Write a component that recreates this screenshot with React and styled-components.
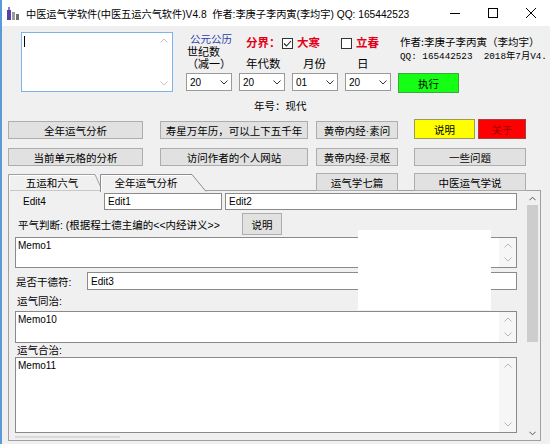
import React from "react";
import styled, { createGlobalStyle } from "styled-components";

const GlobalStyle = createGlobalStyle`
  html, body { margin: 0; padding: 0; background: #f0f0f0; }
  body { font-family: "Liberation Sans", "Noto Sans CJK SC", sans-serif; }
  * { box-sizing: border-box; }
`;

const Window = styled.div`
  width: 550px;
  height: 444px;
  overflow: hidden;
  background: #f0f0f0;
  border-left: 2px solid #5a9ad8;
  display: flex;
  flex-direction: column;
  font-size: 10.5px;
  color: #000;
`;

const TitleBar = styled.div`
  height: 26px;
  flex-shrink: 0;
  background: #fff;
  display: flex;
  align-items: center;
`;

const AppIcon = styled.svg`
  margin-left: 5px;
  width: 12px;
  height: 13px;
  flex-shrink: 0;
`;

const TitleText = styled.div`
  flex: 1;
  margin-left: 7px;
  font-size: 10.2px;
  white-space: nowrap;
  overflow: hidden;
`;

const WinButtons = styled.div`
  display: flex;
`;

const WinButton = styled.div`
  width: 38px;
  height: 26px;
  display: flex;
  align-items: center;
  justify-content: center;
`;

const TopArea = styled.div`
  display: flex;
  align-items: flex-start;
  padding-top: 6px;
  height: 93px;
  flex-shrink: 0;
`;

const MemoFrame = styled.div`
  position: relative;
  display: flex;
  width: ${(p) => p.$w}px;
  height: ${(p) => p.$h}px;
  margin-left: ${(p) => p.$ml || 0}px;
  margin-top: ${(p) => p.$mt || 0}px;
  background: #fff;
  border: 1px solid ${(p) => (p.$focus ? "#7eb4ea" : "#8a8a8a")};
  flex-shrink: 0;
`;

const MemoText = styled.div`
  flex: 1;
  padding: 2px 0 0 2px;
  font-size: 10px;
  line-height: 12px;
`;

const Caret = styled.div`
  width: 1px;
  height: 11px;
  margin: 3px 0 0 2px;
  background: #000;
`;

const ScrollCol = styled.div`
  width: 17px;
  display: flex;
  flex-direction: column;
  justify-content: space-between;
  align-items: center;
  padding: 5px 0;
  background: ${(p) => (p.$track ? "#f6f6f6" : "transparent")};
`;

const RightPanel = styled.div`
  margin-left: 13px;
  display: flex;
  flex-direction: column;
`;

const UpperRow = styled.div`
  display: flex;
  height: 41px;
`;

const CenturyCol = styled.div`
  width: 54px;
  display: flex;
  flex-direction: column;
`;

const BlueLabel = styled.div`
  margin-top: 1px;
  padding-left: 4px;
  line-height: 12px;
  color: #2b3fa7;
`;

const StackLabel = styled.div`
  margin-top: ${(p) => p.$mt || 0}px;
  padding-left: 1px;
  line-height: 11px;
  height: 11px;
  font-size: 11px;
  white-space: nowrap;
`;

const DateLabels = styled.div`
  width: 160px;
  display: flex;
  flex-direction: column;
`;

const SplitRow = styled.div`
  margin-top: 5px;
  height: 12px;
  display: flex;
  align-items: center;
`;

const RedLabel = styled.span`
  width: ${(p) => (p.$w ? `${p.$w}px` : "auto")};
  margin-left: ${(p) => p.$ml || 0}px;
  color: #e3001b;
  font-weight: bold;
  font-size: 11.5px;
  line-height: 12px;
  white-space: nowrap;
`;

const CheckBox = styled.svg`
  width: 11px;
  height: 11px;
  margin-left: ${(p) => p.$ml || 0}px;
  margin-right: 4px;
  flex-shrink: 0;
`;

const FieldLabels = styled.div`
  margin-top: 9px;
  height: 12px;
  display: flex;
`;

const FieldLabel = styled.span`
  width: ${(p) => p.$w}px;
  margin-left: ${(p) => p.$ml || 0}px;
  font-size: 11.5px;
  line-height: 12px;
`;

const Author = styled.div`
  display: flex;
  flex-direction: column;
  white-space: nowrap;
`;

const AuthorLine = styled.div`
  margin-top: ${(p) => p.$mt}px;
  line-height: 12px;
  font-family: ${(p) =>
    p.$mono
      ? '"Liberation Mono", "Noto Sans CJK SC", monospace'
      : '"Noto Sans CJK SC", sans-serif'};
  font-size: ${(p) => (p.$mono ? "9.3px" : "10.5px")};
`;

const ComboRow = styled.div`
  display: flex;
  align-items: flex-start;
  gap: 7px;
  height: 20px;
`;

const Combo = styled.div`
  width: 46px;
  height: 18px;
  background: #fff;
  border: 1px solid #9a9a9a;
  display: flex;
  align-items: center;
  justify-content: space-between;
  padding: 0 3px;
  font-size: 10px;
`;

const Btn = styled.div`
  width: ${(p) => (p.$w ? `${p.$w}px` : "auto")};
  height: ${(p) => p.$h || 18}px;
  grid-column: ${(p) => p.$col || "auto"};
  align-self: ${(p) => p.$align || "end"};
  background: ${(p) => p.$bg || "#e1e1e1"};
  border: 1px solid ${(p) => p.$bd || "#adadad"};
  color: ${(p) => p.$fg || "#000"};
  display: flex;
  align-items: center;
  justify-content: center;
  font-size: 10.5px;
  white-space: nowrap;
  flex-shrink: 0;
`;

const EraRow = styled.div`
  margin-top: 7px;
  padding-left: 68px;
  line-height: 12px;
`;

const ButtonGrid = styled.div`
  margin-left: 6px;
  display: grid;
  grid-template-columns: 135px 17px 148px 8px 82px 16px 112px;
  grid-template-rows: 20px 19px;
  row-gap: 8px;
  flex-shrink: 0;
`;

const ColorPair = styled.div`
  grid-column: 7;
  display: flex;
  gap: 3px;
`;

const TabRow = styled.div`
  position: relative;
  z-index: 2;
  margin-top: 7px;
  margin-left: 6px;
  height: 17px;
  display: grid;
  grid-template-columns: 135px 17px 148px 8px 82px 16px 112px;
  flex-shrink: 0;
`;

const TabStrip = styled.div`
  grid-column: 1 / 4;
  display: flex;
  align-items: flex-end;
`;

const Tab = styled.div`
  position: relative;
  width: ${(p) => p.$w}px;
  height: ${(p) => p.$h}px;
  margin-left: ${(p) => p.$ml || 0}px;
  margin-bottom: ${(p) => p.$mb || 0}px;
  z-index: ${(p) => (p.$active ? 2 : 1)};
  display: flex;
  align-items: center;
  flex-shrink: 0;
`;

const TabShape = styled.svg`
  position: absolute;
  left: 0;
  top: 0;
  width: 100%;
  height: 100%;
`;

const TabLabel = styled.span`
  position: relative;
  width: ${(p) => p.$w}px;
  text-align: center;
  line-height: 12px;
`;

const Panel = styled.div`
  position: relative;
  margin-left: 6px;
  width: 533px;
  height: 251px;
  border: 1px solid #a0a0a0;
  display: flex;
  flex-shrink: 0;
`;

const PanelBody = styled.div`
  flex: 1;
  padding-left: 6px;
  display: flex;
  flex-direction: column;
`;

const EditRow = styled.div`
  display: flex;
  align-items: center;
  margin-top: ${(p) => p.$mt}px;
  height: ${(p) => p.$h}px;
`;

const EditLabel = styled.span`
  width: ${(p) => p.$w}px;
  padding-left: ${(p) => p.$pl || 0}px;
  font-size: ${(p) => (p.$latin ? "10px" : "10.5px")};
  white-space: nowrap;
  flex-shrink: 0;
`;

const Edit = styled.div`
  width: ${(p) => p.$w}px;
  height: ${(p) => p.$h || 17}px;
  margin-left: ${(p) => p.$ml || 0}px;
  background: #fff;
  border: 1px solid #8a8a8a;
  padding-left: 3px;
  display: flex;
  align-items: center;
  font-size: 10px;
  flex-shrink: 0;
`;

const JudgeRow = styled.div`
  display: flex;
  align-items: flex-start;
  margin-top: 3px;
  height: 22px;
`;

const JudgeText = styled.span`
  width: 227px;
  margin-top: 6px;
  padding-left: 3px;
  line-height: 12px;
  white-space: nowrap;
`;

const SectionLabel = styled.div`
  margin-top: ${(p) => p.$mt}px;
  padding-left: 2px;
  line-height: 13px;
  height: 13px;
`;

const HScrollStub = styled.div`
  margin-top: 3px;
  width: 105px;
  height: 2px;
  background: #dadada;
`;

const VScroll = styled.div`
  width: 13px;
  margin-right: 1px;
  display: flex;
  flex-direction: column;
  align-items: center;
  background: #f0f0f0;
`;

const ArrowBox = styled.div`
  height: 14px;
  width: 100%;
  display: flex;
  align-items: center;
  justify-content: center;
`;

const Thumb = styled.div`
  width: 11px;
  height: 137px;
  background: #cdcdcd;
`;

const Spacer = styled.div`
  flex: 1;
`;

const WhiteCover = styled.div`
  position: absolute;
  left: 349px;
  top: 39px;
  width: 133px;
  height: 80px;
  background: #fff;
`;

const Chevron = ({ up, color = "#b9b9b9", w = 8 }) => (
  <svg width={w} height="5" viewBox="0 0 8 5">
    <polyline
      points={up ? "0.5,4.5 4,1 7.5,4.5" : "0.5,0.5 4,4 7.5,0.5"}
      fill="none"
      stroke={color}
      strokeWidth="1"
    />
  </svg>
);

const Memo = ({ w, h, ml, mt, focus, children }) => (
  <MemoFrame $w={w} $h={h} $ml={ml} $mt={mt} $focus={focus}>
    <MemoText>{children}</MemoText>
    <ScrollCol $track={!focus}>
      <Chevron up />
      <Chevron />
    </ScrollCol>
  </MemoFrame>
);

const Check = ({ checked, ml }) => (
  <CheckBox viewBox="0 0 11 11" $ml={ml}>
    <rect x="0.5" y="0.5" width="10" height="10" fill="#fff" stroke="#333" />
    {checked && (
      <polyline points="2,5.5 4.5,8 9,3" fill="none" stroke="#222" strokeWidth="1.1" />
    )}
  </CheckBox>
);

const DateCombo = ({ value }) => (
  <Combo>
    <span>{value}</span>
    <Chevron color="#333" />
  </Combo>
);

export default function App() {
  return (
    <>
      <GlobalStyle />
      <Window>
        <TitleBar>
          <AppIcon viewBox="0 0 12 13">
            <rect x="0" y="3" width="4" height="10" fill="#5b3fa4" />
            <rect x="1" y="0" width="2" height="3" fill="#8a7cc4" />
            <rect x="5" y="5" width="3" height="8" fill="#9a9a9a" />
            <rect x="9" y="7" width="3" height="6" fill="#6e6e6e" />
          </AppIcon>
          <TitleText>
            中医运气学软件(中医五运六气软件)V4.8&nbsp;&nbsp;作者:李庚子李丙寅(李均宇) QQ: 165442523
          </TitleText>
          <WinButtons>
            <WinButton>
              <svg width="10" height="10" viewBox="0 0 10 10">
                <line x1="0" y1="5.5" x2="10" y2="5.5" stroke="#000" />
              </svg>
            </WinButton>
            <WinButton>
              <svg width="10" height="10" viewBox="0 0 10 10">
                <rect x="0.5" y="0.5" width="9" height="9" fill="none" stroke="#000" />
              </svg>
            </WinButton>
            <WinButton>
              <svg width="10" height="10" viewBox="0 0 10 10">
                <line x1="0" y1="0" x2="10" y2="10" stroke="#000" />
                <line x1="10" y1="0" x2="0" y2="10" stroke="#000" />
              </svg>
            </WinButton>
          </WinButtons>
        </TitleBar>

        <TopArea>
          <MemoFrame $w={152} $h={60} $ml={19} $focus>
            <Caret />
            <Spacer />
            <ScrollCol>
              <Chevron up color="#c4c4c4" />
              <Chevron color="#c4c4c4" />
            </ScrollCol>
          </MemoFrame>
          <RightPanel>
            <UpperRow>
              <CenturyCol>
                <BlueLabel>公元公历</BlueLabel>
                <StackLabel $mt={2}>世纪数</StackLabel>
                <StackLabel $mt={1}>（减一）</StackLabel>
              </CenturyCol>
              <DateLabels>
                <SplitRow>
                  <RedLabel $w={36} $ml={6}>分界：</RedLabel>
                  <Check checked />
                  <RedLabel>大寒</RedLabel>
                  <Check ml={21} />
                  <RedLabel>立春</RedLabel>
                </SplitRow>
                <FieldLabels>
                  <FieldLabel $w={57} $ml={6}>年代数</FieldLabel>
                  <FieldLabel $w={54}>月份</FieldLabel>
                  <FieldLabel $w={20}>日</FieldLabel>
                </FieldLabels>
              </DateLabels>
              <Author>
                <AuthorLine $mt={4}>作者:李庚子李丙寅（李均宇）</AuthorLine>
                <AuthorLine $mt={3} $mono>
                  QQ: 165442523&nbsp;&nbsp;2018年7月V4.
                </AuthorLine>
              </Author>
            </UpperRow>
            <ComboRow>
              <DateCombo value="20" />
              <DateCombo value="20" />
              <DateCombo value="01" />
              <DateCombo value="20" />
              <Btn $w={61} $h={20} $bg="#14ff14" $bd="#3aa83a" $align="start">
                执行
              </Btn>
            </ComboRow>
            <EraRow>年号：现代</EraRow>
          </RightPanel>
        </TopArea>

        <ButtonGrid>
          <Btn $col={1}>全年运气分析</Btn>
          <Btn $col={3}>寿星万年历，可以上下五千年</Btn>
          <Btn $col={5}>黄帝内经·素问</Btn>
          <ColorPair>
            <Btn $w={61} $h={20} $bg="#ffff00" $bd="#9a9a5a">
              说明
            </Btn>
            <Btn $w={48} $h={20} $bg="#ff0000" $bd="#a04040" $fg="#990000">
              关于
            </Btn>
          </ColorPair>
          <Btn $col={1}>当前单元格的分析</Btn>
          <Btn $col={3}>访问作者的个人网站</Btn>
          <Btn $col={5}>黄帝内经·灵枢</Btn>
          <Btn $col={7}>一些问题</Btn>
        </ButtonGrid>

        <TabRow>
          <TabStrip>
            <Tab $w={95} $h={17}>
              <TabShape viewBox="0 0 95 17" preserveAspectRatio="none">
                <polygon points="0.5,17 0.5,0.5 87,0.5 94.5,17" fill="#f0f0f0" stroke="#a0a0a0" />
                <polyline points="1.5,17 1.5,1.5 86,1.5" fill="none" stroke="#fff" />
              </TabShape>
              <TabLabel $w={88}>五运和六气</TabLabel>
            </Tab>
            <Tab $w={107} $h={18} $ml={-3} $mb={-1} $active>
              <TabShape viewBox="0 0 107 18" preserveAspectRatio="none">
                <polygon points="0,18 0,0 92,0 107,18" fill="#f0f0f0" />
                <polyline points="0.5,18 0.5,0.5 92,0.5 106,17.5" fill="none" stroke="#8c8c8c" />
                <polyline points="1.5,18 1.5,1.5 91,1.5" fill="none" stroke="#fff" />
              </TabShape>
              <TabLabel $w={92}>全年运气分析</TabLabel>
            </Tab>
          </TabStrip>
          <Btn $col={5} $align="start">运气学七篇</Btn>
          <Btn $col={7} $align="start">中医运气学说</Btn>
        </TabRow>

        <Panel>
          <PanelBody>
            <EditRow $mt={2} $h={17}>
              <EditLabel $w={89} $pl={8} $latin>Edit4</EditLabel>
              <Edit $w={118}>Edit1</Edit>
              <Edit $w={292} $ml={3}>Edit2</Edit>
            </EditRow>
            <JudgeRow>
              <JudgeText>平气判断: (根据程士德主编的&lt;&lt;内经讲义&gt;&gt;</JudgeText>
              <Btn $w={40} $h={22} $align="start">说明</Btn>
            </JudgeRow>
            <Memo w={502} h={31} mt={2}>Memo1</Memo>
            <EditRow $mt={4} $h={18}>
              <EditLabel $w={72} $pl={1}>是否干德符:</EditLabel>
              <Edit $w={430} $h={18}>Edit3</Edit>
            </EditRow>
            <SectionLabel $mt={5}>运气同治:</SectionLabel>
            <Memo w={502} h={32} mt={3}>Memo10</Memo>
            <SectionLabel $mt={1}>运气合治:</SectionLabel>
            <Memo w={502} h={76}>Memo11</Memo>
            <HScrollStub />
          </PanelBody>
          <VScroll>
            <ArrowBox>
              <Chevron up color="#404040" w={7} />
            </ArrowBox>
            <Thumb />
            <Spacer />
            <ArrowBox>
              <Chevron color="#404040" w={7} />
            </ArrowBox>
          </VScroll>
          <WhiteCover />
        </Panel>
      </Window>
    </>
  );
}
